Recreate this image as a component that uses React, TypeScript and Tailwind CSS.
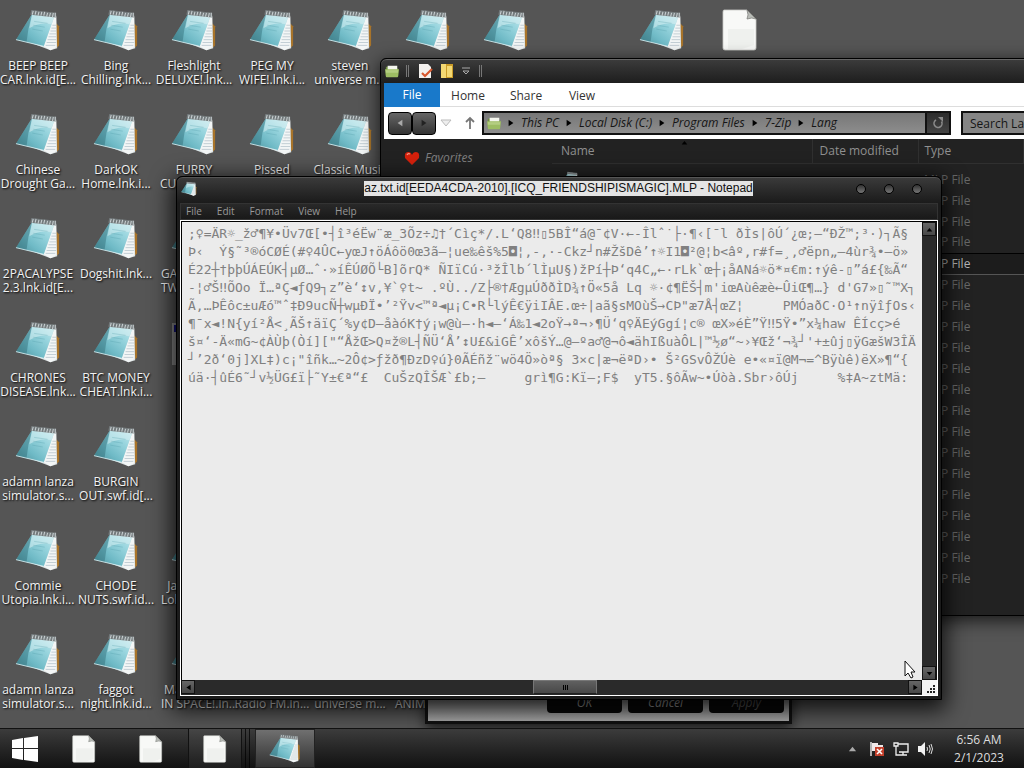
import { useId, type ReactNode } from 'react'

type IconKind = 'notepad' | 'page' | 'frame'

interface Shortcut {
  col: number
  row: number
  kind?: IconKind
  label?: string
  // label runs under a window, so it hangs from the left edge
  tucked?: boolean
}

const shortcuts: Shortcut[] = [
  { col: 1, row: 1, label: 'BEEP BEEP\nCAR.lnk.id[E...' },
  { col: 2, row: 1, label: 'Bing\nChilling.lnk...' },
  { col: 3, row: 1, label: 'Fleshlight\nDELUXE!.lnk...' },
  { col: 4, row: 1, label: 'PEG MY\nWIFE!.lnk.i...' },
  { col: 5, row: 1, label: 'steven\nuniverse m...' },
  { col: 6, row: 1 },
  { col: 7, row: 1 },
  { col: 9, row: 1 },
  { col: 10, row: 1, kind: 'page' },
  { col: 1, row: 2, label: 'Chinese\nDrought Ga...' },
  { col: 2, row: 2, label: 'DarkOK\nHome.lnk.i...' },
  { col: 3, row: 2, label: 'FURRY\nCUMSHOT...' },
  { col: 4, row: 2, label: 'Pissed' },
  { col: 5, row: 2, label: 'Classic Music' },
  { col: 1, row: 3, label: '2PACALYPSE\n2.3.lnk.id[E...' },
  { col: 2, row: 3, label: 'Dogshit.lnk...' },
  { col: 3, row: 3, label: 'GA\nTW', tucked: true },
  { col: 1, row: 4, label: 'CHRONES\nDISEASE.lnk...' },
  { col: 2, row: 4, label: 'BTC MONEY\nCHEAT.lnk.i...' },
  { col: 3, row: 4, kind: 'frame' },
  { col: 1, row: 5, label: 'adamn lanza\nsimulator.s...' },
  { col: 2, row: 5, label: 'BURGIN\nOUT.swf.id[...' },
  { col: 1, row: 6, label: 'Commie\nUtopia.lnk.i...' },
  { col: 2, row: 6, label: 'CHODE\nNUTS.swf.id...' },
  { col: 3, row: 6, label: '  Ja\nLol', tucked: true },
  { col: 1, row: 7, label: 'adamn lanza\nsimulator.s...' },
  { col: 2, row: 7, label: 'faggot\nnight.lnk.id...' },
  { col: 3, row: 7, label: ' Ma\nIN SPACE!.ln...', tucked: true },
  { col: 4, row: 7, label: '\nRadio FM.ln...' },
  { col: 5, row: 7, label: '\nuniverse m...' },
  { col: 6, row: 7, label: '\nANIMI', tucked: true },
]

const colStart: Record<number, string> = {
  1: 'col-start-1',
  2: 'col-start-2',
  3: 'col-start-3',
  4: 'col-start-4',
  5: 'col-start-5',
  6: 'col-start-6',
  7: 'col-start-7',
  9: 'col-start-9',
  10: 'col-start-10',
}

const rowStart: Record<number, string> = {
  1: 'row-start-1',
  2: 'row-start-2',
  3: 'row-start-3',
  4: 'row-start-4',
  5: 'row-start-5',
  6: 'row-start-6',
  7: 'row-start-7',
}

const noteLines = [
  ";♀=ÄR☼_ž♂¶¥•Üv7Œ[•┤î³éËw¨æ_3Õz÷♫†´Cìç*/.L‘Q8‼▯5BÎ“á@¯¢V·←-Îlˆ˙├·¶‹[¯l ðÌs|ôÚ´¿œ;—“ÐŽ™;³·)┐Ã§",
  "Þ‹  Ý§˜³®óCØÉ(#♀4ÛC←yœJ↑öÁôö0œ3ã—¦ue‰êš%5◘¦‚-‚·-Ckz┘n#ŽšDê’↑☼I1◘²@¦b<âº,r#f=¸,♂ëpn„—4ùr¾•—ö»",
  "É22┼†þþÚÁEÚK┤µØ…ˆ·»íÊÚØÕ└B]õrQ* ÑIïCú·³žÎlb´lÌµU§)žPí┼Þ‘q4C„←·rLk`œ┼¡åANá☼ö*¤€m:↑ýê-▯”á£{‰Ã“",
  "-¦♂Š‼ÕOo Ï…ªÇ◄ƒQ9┐z”è‘↕v‚¥`♀t~ .ºÙ../Z├®†ÆgµÚððÌD¾↑Ö«5å Lq ☼·¢¶ËŠ┤m'iœAùêæè←ÛiŒ¶…} d'G7»▯˜™X┐",
  'Ã,…ÞÊôc±uÆó™ˆ‡Ð9ucÑ┼wµÐÏ•’²Ÿv<™ª◄µ¡C•R└lýÊ€ÿiIÂE.œ÷|aã§sMOùŠ→CÞ"æ7Å┤œZ¦     PMÓaðC·O¹↑nÿîƒOs‹',
  "¶¯x◄!N{yí²Å<¸ÃŠ↑äïÇ´%y¢D—åàóK†ý¡w@ù—·h◄—‘Á‰1◄2oŸ→ª¬›¶Ü‘q♀ÄEýGgí¦c® œX»éÈ”Ÿ‼5Ÿ•”x¼haw ÊÍcç>é",
  "š¤‘-Ä«mG~¢ÀÙþ(Òí][\"“ÅžŒ>Q¤ž®L┤ÑÜ‘Å’↕U£&iGÊ’xôšÝ…@—ºa♂@¬ô◄ähIßuàÔL|™½ø“~›¥Œž‘¬¾┘'+±ûj▯ÿGæšW3ÎÄ",
  '┘’2ð‘0j]XL‡)c¡"îñk…~2Ô¢>ƒžð¶ÐzD♀ú}0ÃÉñž¨wö4Ö»òª§ 3×c|æ¬ëªD›• Š²GSvÔŽÚè e•«¤ï@M¬=^Bÿùê)ëX»¶“{',
  'úä·┤ûÉ6˜┘v½ÜG£ï├˜Y±€ª“£  CuŠzQÎŠÆ`£b;—     grì¶G:Kï—;F$  yT5.§ôÃw~•Úòà.Sbr›ôÚj     %‡A~ztMä:',
]

const files = Array.from({ length: 20 }, (_, i) => ({ id: i, type: 'MLP File', selected: i === 4 }))

function NotepadIcon({ className }: { className: string }) {
  const id = useId()
  return (
    <svg viewBox="0 0 48 48" className={className} aria-hidden="true">
      <defs>
        <linearGradient id={id} x1="0" y1="1" x2="1" y2="0">
          <stop offset="0" stopColor="#4a8d97" />
          <stop offset="0.35" stopColor="#6fbac6" />
          <stop offset="0.7" stopColor="#9ad6df" />
          <stop offset="1" stopColor="#c9e9ee" />
        </linearGradient>
      </defs>
      <path d="M43 16l3 3v20l-3 3z" fill="#a8742a" />
      <path d="M13 35l24 9 7-2-1-34-5-2z" fill="#dde3e4" />
      <path d="M41 9L30 40l7 4 6-3V9z" fill="#f3f6f6" />
      <path
        d="M39 18h4M38 21h5M37 24h6M36 27h7M35 30h8M34 33h9M33 36h10M32 39h10"
        stroke="#b4c3cb"
        strokeWidth="0.8"
      />
      <path d="M18 6l23 3-11 31L1 33z" fill={`url(#${id})`} />
      <path d="M18 6l-4 16-2 14-11-3z" fill="#2f6b76" opacity="0.45" />
      <path d="M18 6l23 3-3 8C30 15 22 17 15 21z" fill="#e0f3f6" opacity="0.5" />
      <path d="M1 33l29 7" stroke="#d7eef1" strokeWidth="0.9" fill="none" />
      <path d="M20 14l14 2M19 18l12 2M18 22l11 2" stroke="#4f9aa6" strokeWidth="0.5" opacity="0.6" />
      <path d="M17 2l26 3v5L16 7z" fill="#737a7c" />
      <path
        d="M18 7l1-4M21 7l1-4M24 8l1-4M27 8l1-4M30 8l1-4M33 9l1-4M36 9l1-4M39 10l1-5M42 10l0-5"
        stroke="#c9d0d2"
        strokeWidth="1.100"
      />
    </svg>
  )
}

function PageIcon({ className }: { className: string }) {
  return (
    <svg viewBox="0 0 36 42" className={className} aria-hidden="true">
      <path d="M2 1h23l9 9v29q0 2-2 2H3q-2 0-2-2V3q0-2 1-2z" fill="#f8f9f7" stroke="#c9cac7" strokeWidth="0.8" />
      <path d="M6 20h26v16L20 40H6z" fill="#e9ebe7" opacity="0.6" />
      <path d="M25 1q2 5 0 9 5-2 9 0z" fill="#b9bcb7" stroke="#7c7e7a" strokeWidth="0.8" />
    </svg>
  )
}

function FrameIcon({ className }: { className: string }) {
  return (
    <svg viewBox="0 0 44 42" className={className} aria-hidden="true">
      <path d="M0 0h44v42H0z" fill="#8f8f8f" />
      <path d="M2 2h42v7H2z" fill="#12127c" />
    </svg>
  )
}

function DesktopIcon({ col, row, kind = 'notepad', label, tucked }: Shortcut) {
  return (
    <div className={`${colStart[col]} ${rowStart[row]} flex flex-col items-center pt-2`}>
      {kind === 'notepad' && <NotepadIcon className="h-[46px] w-[46px] shrink-0" />}
      {kind === 'page' && <PageIcon className="mt-[1px] h-[42px] w-9 shrink-0" />}
      {kind === 'frame' && <FrameIcon className="mt-[3px] h-[42px] w-11 shrink-0" />}
      {label && (
        <div
          className={`mt-[5px] w-full whitespace-pre text-[12px] leading-[14px] text-[#f2f2f2] [text-shadow:1px_1px_2px_#000] ${
            tucked ? 'pl-[6px] text-left' : 'text-center'
          }`}
        >
          {label}
        </div>
      )}
    </div>
  )
}

function FolderIcon({ className }: { className: string }) {
  return (
    <svg viewBox="0 0 18 16" className={className} aria-hidden="true">
      <path d="M2 3h6l2 2h6v9H2z" fill="#6f8f3e" />
      <path d="M4 2h11v6H4z" fill="#f4f6ee" />
      <path d="M1 6h16l-1 8q0 1-1 1H3q-1 0-1-1z" fill="#9dbd63" />
      <path d="M2 7h14v3H2z" fill="#c3d996" opacity="0.6" />
    </svg>
  )
}

function Triangle({ dir, className }: { dir: 'left' | 'right' | 'up' | 'down'; className: string }) {
  const paths = { left: 'M8 1v8L2 5z', right: 'M2 1v8l6-4z', up: 'M1 8h8L5 3z', down: 'M1 3h8L5 8z' }
  return (
    <svg viewBox="0 0 10 10" className={className} aria-hidden="true">
      <path d={paths[dir]} fill="currentColor" />
    </svg>
  )
}

function Explorer() {
  const crumbs = ['This PC', 'Local Disk (C:)', 'Program Files', '7-Zip', 'Lang']

  return (
    <section
      aria-label="Lang"
      className="absolute -right-[100px] left-[380px] top-[58px] flex h-[558px] flex-col rounded-t-md border border-black bg-[#222] px-[3px] pb-[3px] shadow-[0_4px_18px_rgba(0,0,0,0.75)]"
    >
      <header className="-mx-[3px] flex h-6 shrink-0 items-center rounded-t-md border-t border-[#666] bg-linear-to-b from-[#3b3b3b] to-[#1e1e1e] pb-px pl-[3px]">
        <FolderIcon className="h-[14px] w-4" />
        <span className="ml-[6px] h-3 w-[3px] border-x border-[#777]" />
        <svg viewBox="0 0 16 16" className="ml-[8px] h-4 w-4" aria-hidden="true">
          <path d="M2 1h9l3 3v11H2z" fill="#f3f1ee" />
          <path d="M5 10l3 3 7-7" stroke="#d8582e" strokeWidth="2.200" fill="none" />
        </svg>
        <svg viewBox="0 0 16 16" className="ml-[6px] h-4 w-4" aria-hidden="true">
          <path d="M2 1h12v14H2z" fill="#c99b28" />
          <path d="M2 1h5v14H2zM8 3h5v11H8z" fill="#f3d873" />
        </svg>
        <svg viewBox="0 0 10 10" className="ml-[6px] h-[10px] w-[10px]" aria-hidden="true">
          <path d="M1 2h8M2 5h6L5 8z" stroke="#aaa" fill="none" />
        </svg>
        <span className="ml-[8px] h-3 w-[3px] border-x border-[#777]" />
      </header>

      <nav className="flex h-6 shrink-0 items-center border-b border-[#ddd] bg-white text-[12px] text-[#333]">
        <button className="h-6 w-14 bg-[#1979ca] text-white">File</button>
        <button className="w-14 pt-[2px]">Home</button>
        <button className="ml-[2px] w-14 pt-[2px]">Share</button>
        <button className="w-14 pt-[2px]">View</button>
      </nav>

      <div className="flex h-8 shrink-0 items-center bg-white pl-[4px]">
        <button
          aria-label="Back"
          className="grid h-[23px] w-6 place-items-center rounded-sm border border-black bg-linear-to-b from-[#666] to-[#333] text-[#aaa]"
        >
          <Triangle dir="left" className="h-2 w-2" />
        </button>
        <button
          aria-label="Forward"
          className="grid h-[23px] w-6 place-items-center rounded-sm border border-black bg-linear-to-b from-[#666] to-[#333] text-[#222]"
        >
          <Triangle dir="right" className="h-2 w-2" />
        </button>
        <svg viewBox="0 0 12 8" className="ml-[4px] h-2 w-3" aria-hidden="true">
          <path d="M1 1h10L6 7z" fill="#eee" stroke="#bbb" />
        </svg>
        <svg viewBox="0 0 12 14" className="ml-[12px] h-[14px] w-3" aria-hidden="true">
          <path d="M6 13V2M2 6l4-4 4 4" stroke="#777" strokeWidth="1.800" fill="none" />
        </svg>
        <div className="ml-[6px] flex h-6 flex-1 items-center border-2 border-[#111] bg-linear-to-b from-[#777] to-[#8d8d8d] pl-[2px] text-[12px] italic text-[#151515]">
          <FolderIcon className="mr-[5px] h-[14px] w-4" />
          {crumbs.map(crumb => (
            <span key={crumb} className="flex items-center">
              <Triangle dir="right" className="h-2 w-2 text-black" />
              <a href="#" className="mx-[6px] leading-4">
                {crumb}
              </a>
            </span>
          ))}
          <button
            aria-label="Refresh"
            className="ml-auto grid h-5 w-6 place-items-center border-l-2 border-[#111] bg-linear-to-b from-[#2c2c2c] to-[#444] text-[#8a8a8a]"
          >
            <svg viewBox="0 0 12 12" className="h-3 w-3" aria-hidden="true">
              <path d="M4 3a4 4 0 1 0 5.500 1.500" stroke="currentColor" strokeWidth="1.600" fill="none" />
              <path d="M6 0h5v5z" fill="currentColor" />
            </svg>
          </button>
        </div>
        <input
          aria-label="Search Lang"
          placeholder="Search Lang"
          className="ml-[10px] h-6 w-[159px] border-2 border-[#111] bg-[#858585] pl-[7px] text-[12px] text-[#151515] placeholder:text-[#151515]"
        />
      </div>

      <div className="flex min-h-0 flex-1 bg-[#222]">
        <aside className="w-[168px] shrink-0 pt-[11px]">
          <a href="#" className="flex items-center pl-5 text-[12px] italic leading-4 text-[#808080]">
            <svg viewBox="0 0 16 15" className="mr-[5px] h-[15px] w-4" aria-hidden="true">
              <path d="M8 14L1 7Q0 1 4 1q3 0 4 3 1-3 4-3 4 0 3 6z" fill="#d8210c" />
              <path d="M3 4q1-2 3-1" stroke="#f89a86" strokeWidth="1.200" fill="none" />
            </svg>
            Favorites
          </a>
        </aside>
        <div className="relative flex-1">
          <Triangle dir="up" className="absolute left-[128px] top-0 h-[7px] w-[9px] text-black" />
          <table className="w-full table-fixed text-left text-[12px]">
            <thead>
              <tr className="h-6 text-[#909090]">
                <th className="w-[260px] border-b border-[#303030] pl-[9px] pt-px font-normal">Name</th>
                <th className="w-[106px] border-b border-l border-[#303030] pl-[7px] pt-px font-normal">
                  Date modified
                </th>
                <th className="w-[105px] border-x border-b border-[#303030] pl-[6px] pt-px font-normal">Type</th>
                <th aria-label="Size" />
              </tr>
              <tr className="h-[6px]" />
            </thead>
            <tbody>
              {files.map(file => (
                <tr
                  key={file.id}
                  className={
                    file.selected
                      ? 'h-[21px] border-y border-t-black border-b-[#555] bg-[#1c1c1c] text-[#b5b5b5]'
                      : 'h-[21px] text-[#686868]'
                  }
                >
                  <td className="pl-[9px]">
                    <NotepadIcon className="h-[18px] w-[18px]" />
                  </td>
                  <td />
                  <td className="pl-[6px] leading-4">{file.type}</td>
                  <td />
                </tr>
              ))}
            </tbody>
          </table>
        </div>
      </div>
    </section>
  )
}

function PropertiesDialog() {
  return (
    <section
      aria-label="Properties"
      className="absolute left-[425px] top-[640px] flex h-[84px] w-[367px] items-end border-x-[3px] border-b-[3px] border-[#111] bg-linear-to-b from-[#444] to-[#a8a8a8] shadow-[0_4px_12px_rgba(0,0,0,0.7)]"
    >
      <div className="flex w-full justify-end gap-[6px] pb-[8px] pr-[5px] text-[12px] italic leading-4 text-[#999]">
        <button className="h-[25px] w-[75px] rounded-sm bg-[#080808] pt-[5px]">OK</button>
        <button className="h-[25px] w-[75px] rounded-sm bg-[#080808] pt-[5px]">Cancel</button>
        <button className="h-[25px] w-[75px] rounded-sm bg-[#080808] pt-[5px] text-[#555]">Apply</button>
      </div>
    </section>
  )
}

function ScrollButton({ dir, label }: { dir: 'left' | 'right' | 'up' | 'down'; label: string }) {
  return (
    <button
      aria-label={label}
      className="grid h-[14px] w-[14px] shrink-0 place-items-center border border-[#111] bg-linear-to-b from-[#666] to-[#484848] text-black"
    >
      <Triangle dir={dir} className="h-[7px] w-[7px]" />
    </button>
  )
}

function Notepad() {
  return (
    <section
      aria-label="Notepad"
      className="absolute left-[176px] top-[176px] flex h-[524px] w-[766px] flex-col rounded-t-md border border-black bg-[#1b1b1b] px-[3px] pb-[3px] shadow-[0_6px_22px_4px_rgba(0,0,0,0.8)]"
    >
      <header className="-mx-[3px] flex h-[26px] shrink-0 items-center rounded-t-md border-t border-[#555] bg-linear-to-b from-[#3a3a3a] to-[#1b1b1b] px-[4px] pb-[4px]">
        <NotepadIcon className="h-4 w-4" />
        <div className="flex flex-1 justify-center">
          <h1 className="ml-[64px] bg-[#e4e4e4] font-['Liberation_Sans',sans-serif] text-[12px] leading-[15px] text-[#111]">
            az.txt.id[EEDA4CDA-2010].[ICQ_FRIENDSHIPISMAGIC].MLP - Notepad
          </h1>
        </div>
        <div className="mr-[15px] flex gap-[18px]">
          {['Minimize', 'Maximize', 'Close'].map(label => (
            <button
              key={label}
              aria-label={label}
              className="h-[10px] w-[10px] rounded-full border border-black bg-linear-to-b from-[#333] to-[#777]"
            />
          ))}
        </div>
      </header>

      <nav className="flex h-[17px] shrink-0 items-center gap-[15px] border border-[#333] bg-linear-to-b from-[#292929] to-[#191919] pb-[2px] pl-[5px] text-[10px] leading-[14px] text-[#999]">
        {['File', 'Edit', 'Format', 'View', 'Help'].map(item => (
          <button key={item}>{item}</button>
        ))}
      </nav>

      <div className="flex min-h-0 flex-1 flex-col border border-white bg-black">
        <div className="flex min-h-0 flex-1 border-l border-t border-black bg-[#ebebeb]">
          <textarea
            aria-label="Text"
            readOnly
            wrap="off"
            defaultValue={noteLines.join('\n')}
            className="min-w-0 flex-1 resize-none overflow-hidden whitespace-pre pl-[6px] pt-[3px] font-['DejaVu_Sans_Mono','Noto_Sans_CJK_JP',monospace] text-[13px] leading-[18px] text-[#808080] outline-none"
          />
          <div className="flex w-[15px] shrink-0 flex-col items-center justify-between border-r border-[#111] bg-[#2a2a2a]">
            <ScrollButton dir="up" label="Scroll up" />
            <ScrollButton dir="down" label="Scroll down" />
          </div>
        </div>
        <div className="flex h-[15px] shrink-0 bg-[#2a2a2a]">
          <ScrollButton dir="left" label="Scroll left" />
          <div className="flex flex-1">
            <button
              aria-label="Scroll position"
              className="ml-[338px] flex h-[14px] w-16 items-center justify-center gap-px border border-[#777] border-b-[#222] bg-linear-to-b from-[#606060] to-[#484848]"
            >
              <span className="h-[5px] w-px bg-black" />
              <span className="h-[5px] w-px bg-black" />
              <span className="h-[5px] w-px bg-black" />
            </button>
          </div>
          <ScrollButton dir="right" label="Scroll right" />
          <svg viewBox="0 0 15 15" className="h-[15px] w-[15px] bg-[#f2f2f2]" aria-hidden="true">
            <path d="M11 5h2v2h-2zM8 8h2v2H8zM11 8h2v2h-2zM5 11h2v2H5zM8 11h2v2H8zM11 11h2v2h-2z" fill="#222" />
          </svg>
        </div>
      </div>
    </section>
  )
}

function TaskButton({ label, className, children }: { label: string; className: string; children: ReactNode }) {
  return (
    <button aria-label={label} className={`grid h-full place-items-center ${className}`}>
      {children}
    </button>
  )
}

function Taskbar() {
  return (
    <footer className="relative flex h-10 shrink-0 items-center border-t border-[#111] bg-linear-to-b from-[#3c3c3c] to-[#121212]">
      <TaskButton label="Start" className="w-[50px]">
        <svg viewBox="0 0 26 26" className="h-[26px] w-[26px]" aria-hidden="true">
          <path d="M0 4l11-2v10H0zM12 2l14-2v12H12zM0 13h11v11L0 22zM12 13h14v13l-14-2z" fill="#fff" />
        </svg>
      </TaskButton>
      <TaskButton label="Document" className="w-[68px]">
        <PageIcon className="h-7 w-6" />
      </TaskButton>
      <TaskButton label="Document" className="w-[66px]">
        <PageIcon className="h-7 w-6" />
      </TaskButton>
      <TaskButton label="Document" className="ml-[4px] w-[54px] border-x border-[#111] bg-white/5">
        <PageIcon className="h-7 w-6" />
      </TaskButton>
      <span className="ml-[3px] h-full w-[5px] border-x border-black/70" />
      <TaskButton
        label="Notepad"
        className="ml-[5px] w-[60px] border border-[#222] bg-linear-to-b from-[#707070] to-[#333]"
      >
        <NotepadIcon className="h-8 w-8" />
      </TaskButton>

      <div className="ml-auto flex items-center text-[#ddd]">
        <Triangle dir="up" className="mr-[12px] h-[9px] w-[9px] text-[#aaa]" />
        <svg viewBox="0 0 16 16" className="mr-[8px] h-4 w-4" aria-hidden="true">
          <path d="M2 1v14" stroke="#eee" strokeWidth="1.400" />
          <path d="M3 2h6v2h5v6H3z" fill="#f1e9e9" />
          <path d="M6 6h9v9H6z" fill="#c2402c" />
          <path d="M8 8l5 5M13 8l-5 5" stroke="#fff" strokeWidth="1.600" />
        </svg>
        <svg viewBox="0 0 16 16" className="mr-[8px] h-4 w-4" aria-hidden="true">
          <path d="M5 3h10v8H6M10 11v3M6 14h8" stroke="#eee" strokeWidth="1.400" fill="none" />
          <path d="M1 2h4v3H1zM3 5v9h3" stroke="#eee" strokeWidth="1.300" fill="none" />
        </svg>
        <svg viewBox="0 0 16 16" className="h-4 w-4" aria-hidden="true">
          <path d="M1 5h3l4-4v14l-4-4H1z" fill="#f2f2f2" />
          <path d="M10 6q1 2 0 4M12 4q2.500 4 0 8M14 3q3 5 0 10" stroke="#ddd" fill="none" />
        </svg>
        <time className="mr-[11px] w-20 pl-[12px] text-center text-[12px] leading-[18px]">
          <span className="block">6:56 AM</span>
          <span className="block">2/1/2023</span>
        </time>
      </div>
    </footer>
  )
}

export default function App() {
  return (
    <div className="flex h-screen flex-col overflow-hidden bg-[#555] font-['Open_Sans','Noto_Sans',sans-serif]">
      <main className="relative min-h-0 flex-1">
        <div className="-ml-px grid auto-cols-[78px] grid-flow-col auto-rows-[104px]">
          {shortcuts.map(item => (
            <DesktopIcon key={`${item.col}-${item.row}`} {...item} />
          ))}
        </div>
        <Explorer />
        <PropertiesDialog />
        <Notepad />
        <svg viewBox="0 0 12 19" className="absolute left-[904px] top-[660px] h-[19px] w-3" aria-hidden="true">
          <path d="M1 1v15l3-3 3 5 2-1-2-5h4z" fill="#fff" stroke="#111" />
        </svg>
      </main>
      <Taskbar />
    </div>
  )
}
